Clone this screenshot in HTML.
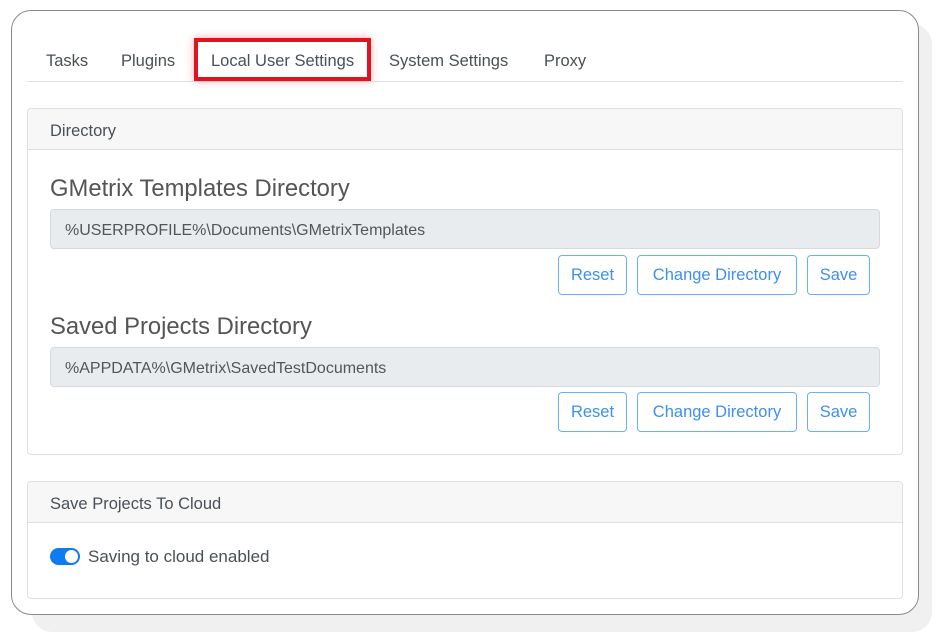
<!DOCTYPE html>
<html><head><style>
*{box-sizing:border-box;margin:0;padding:0}
body{width:940px;height:639px;background:#fff;position:relative;font-family:"Liberation Sans",sans-serif;color:#495057;overflow:hidden}
.shadow{position:absolute;left:32px;top:24px;width:900px;height:608px;border-radius:20px;background:#f0f0f0}
.frame{position:absolute;left:11px;top:10px;width:908px;height:605px;border:1.5px solid #8a8a8a;border-radius:20px;background:#fff}
.a{position:absolute}
.tab{position:absolute;top:52px;font-size:16.5px;color:#495057}
.line{position:absolute;left:27px;top:81px;width:876px;height:1px;background:#dee2e6}
.red{position:absolute;left:194px;top:38px;width:177px;height:43px;border:4px solid #e0141e;box-shadow:0 0 8px rgba(224,20,30,.35)}
.card{position:absolute;left:27px;width:876px;border:1px solid #dfdfdf;border-radius:4px;background:#fff}
.hd{height:41px;background:#f7f7f7;border-bottom:1px solid #dfdfdf;padding:13px 0 0 22px;font-size:16.5px;border-radius:4px 4px 0 0}
.h{position:absolute;left:50px;font-size:23.8px;color:#555;font-weight:300}
.in{position:absolute;left:50px;width:830px;height:40px;background:#e9ecef;border:1px solid #d6dade;border-radius:4px;font-size:16px;padding:12px 0 0 14px;color:#555}
.b{position:absolute;height:40px;border:1.5px solid #6ab0f7;border-radius:4px;color:#3d8ff0;font-size:16.5px;text-align:center;padding-top:10px;white-space:nowrap}
</style></head><body>
<div class="shadow"></div>
<div class="frame"></div>
<div class="tab" style="left:46px">Tasks</div>
<div class="tab" style="left:121px">Plugins</div>
<div class="tab" style="left:211px">Local User Settings</div>
<div class="tab" style="left:389px">System Settings</div>
<div class="tab" style="left:544px">Proxy</div>
<div class="line"></div>
<div class="red"></div>
<div class="card" style="top:108px;height:347px"><div class="hd">Directory</div></div>
<div class="h" style="top:175px">GMetrix Templates Directory</div>
<div class="in" style="top:209px">%USERPROFILE%\Documents\GMetrixTemplates</div>
<div class="b" style="left:558px;top:255px;width:69px">Reset</div>
<div class="b" style="left:637px;top:255px;width:160px">Change Directory</div>
<div class="b" style="left:807px;top:255px;width:63px">Save</div>
<div class="h" style="top:313px">Saved Projects Directory</div>
<div class="in" style="top:347px">%APPDATA%\GMetrix\SavedTestDocuments</div>
<div class="b" style="left:558px;top:392px;width:69px">Reset</div>
<div class="b" style="left:637px;top:392px;width:160px">Change Directory</div>
<div class="b" style="left:807px;top:392px;width:63px">Save</div>
<div class="card" style="top:481px;height:118px"><div class="hd">Save Projects To Cloud</div></div>
<div class="a" style="left:50px;top:548px;width:30px;height:17px;border-radius:9px;background:#0d7cf2"></div>
<div class="a" style="left:65px;top:550px;width:13px;height:13px;border-radius:50%;background:#fff"></div>
<div class="a" style="left:88px;top:547px;font-size:17px">Saving to cloud enabled</div>
</body></html>
